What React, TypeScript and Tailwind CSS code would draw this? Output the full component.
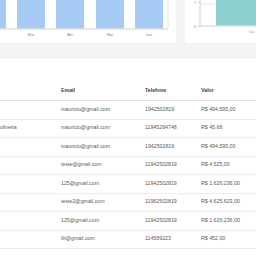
import React from "react";

const rows = [
  { name: "", email: "mauricio@gmail.com", tel: "1942502819", val: "R$ 494.595,00" },
  { name: "oliveira", email: "mauricio@gmail.com", tel: "11945264748", val: "R$ 45,68" },
  { name: "", email: "mauricio@gmail.com", tel: "1942502819", val: "R$ 494.595,00" },
  { name: "", email: "teste@gmail.com", tel: "11942502819", val: "R$ 4.525,00" },
  { name: "", email: "125@gmail.com", tel: "11942502819", val: "R$ 1.626.236,00" },
  { name: "", email: "teste2@gmail.com", tel: "11962502819", val: "R$ 4.625.623,00" },
  { name: "", email: "125@gmail.com", tel: "11942502819", val: "R$ 1.626.236,00" },
  { name: "", email: "lili@gmail.com", tel: "114589223", val: "R$ 452,00" },
];

function BarCard() {
  const bars = [
    { x: -22, label: "" },
    { x: 17, label: "Mar" },
    { x: 56, label: "Abr" },
    { x: 96, label: "Mai" },
    { x: 135, label: "Jun" },
  ];
  return (
    <div className="w-[176px] h-[43px] bg-white shrink-0">
      <svg width="176" height="43" className="block">
        <line x1="168" y1="0" x2="168" y2="29" stroke="#e5e5e5" strokeWidth="1" />
        {bars.map((b, i) => (
          <rect key={i} x={b.x} y={0} width={28} height={28.5} fill="#a5cbf4" />
        ))}
        <line x1="0" y1="29" x2="168" y2="29" stroke="#d0d0d0" strokeWidth="1" />
        {bars.map((b, i) =>
          b.label ? (
            <text key={i} x={b.x + 14} y={35.5} fontSize="4" fill="#888" textAnchor="middle" fontFamily="Liberation Sans, sans-serif">
              {b.label}
            </text>
          ) : null
        )}
      </svg>
    </div>
  );
}

function TealCard() {
  return (
    <div className="flex-1 h-[43px] bg-white">
      <svg width="71" height="43" className="block">
        <text x="10" y="4" fontSize="4" fill="#888" textAnchor="middle" fontFamily="Liberation Sans, sans-serif">1</text>
        <text x="10" y="27.5" fontSize="4" fill="#888" textAnchor="middle" fontFamily="Liberation Sans, sans-serif">0</text>
        <line x1="13" y1="2.5" x2="15" y2="2.5" stroke="#aaa" strokeWidth="0.6" />
        <line x1="13" y1="26" x2="15" y2="26" stroke="#aaa" strokeWidth="0.6" />
        <line x1="15" y1="4" x2="71" y2="4" stroke="#e5e5e5" strokeWidth="1" />
        <rect x="31" y="0" width="60" height="25.5" fill="#8ccfcf" />
        <line x1="15" y1="0" x2="15" y2="26" stroke="#cfcfcf" strokeWidth="1" />
        <line x1="15" y1="26" x2="71" y2="26" stroke="#cfcfcf" strokeWidth="1" />
        <text x="64" y="32.5" fontSize="4" fill="#888" fontFamily="Liberation Sans, sans-serif">Ca</text>
      </svg>
    </div>
  );
}

export default function App() {
  return (
    <div className="w-[256px] h-[256px] overflow-hidden bg-[#f3f4f6] font-['Liberation_Sans',sans-serif]">
      <div className="flex gap-[9px]">
        <BarCard />
        <TealCard />
      </div>
      <div className="mt-[14px] bg-white h-[199px] pt-[24.5px] border-t border-[#ebebeb]">
        <div className="flex h-[18.5px] items-center border-b border-[#e3e3e3] text-[5.25px] text-[#444] font-bold">
          <div className="w-[61px]"></div>
          <div className="w-[84px]">Email</div>
          <div className="w-[56px]">Telefone</div>
          <div className="flex-1">Valor</div>
        </div>
        {rows.map((r, i) => (
          <div key={i} className="flex h-[18.5px] items-center border-b border-[#ececec] text-[5.25px] text-[#5a5a5a]">
            <div className="w-[61px] overflow-hidden whitespace-nowrap">{r.name}</div>
            <div className="w-[84px]">{r.email}</div>
            <div className="w-[56px]">{r.tel}</div>
            <div className="flex-1">{r.val}</div>
          </div>
        ))}
      </div>
    </div>
  );
}
